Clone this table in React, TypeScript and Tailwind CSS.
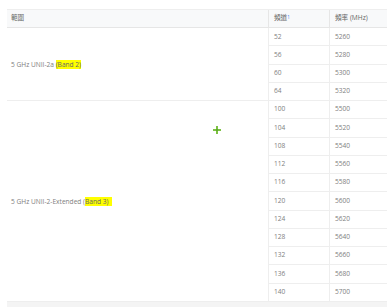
const band2 = [
  ["52", "5260"],
  ["56", "5280"],
  ["60", "5300"],
  ["64", "5320"],
];

const band3 = [
  ["100", "5500"],
  ["104", "5520"],
  ["108", "5540"],
  ["112", "5560"],
  ["116", "5580"],
  ["120", "5600"],
  ["124", "5620"],
  ["128", "5640"],
  ["132", "5660"],
  ["136", "5680"],
  ["140", "5700"],
];

function Row({ ch, mhz }: { ch: string; mhz: string }) {
  return (
    <>
      <div className="flex items-center pl-[5px] border-l border-b border-[#eeeeee]">{ch}</div>
      <div className="flex items-center pl-[5px] border-l border-b border-[#eeeeee]">{mhz}</div>
    </>
  );
}

export default function App() {
  return (
    <div
      className="w-[387px] h-[307px] overflow-hidden bg-white pt-[9px] pl-[7px] text-[6.6px] leading-none text-[#808080]"
      style={{ fontFamily: '"Open Sans", "Noto Sans CJK TC", sans-serif' }}
    >
      <div className="w-[420px] border-t border-[#eeeeee]">
        <div className="grid grid-cols-[261px_61px_98px] grid-rows-[18.3px_repeat(4,18.2px)_repeat(11,18.25px)]">
          <div className="flex items-center pl-[4px] bg-[#f8f9fa] border-b border-[#e6e6e6] text-[#666]">範圍</div>
          <div className="flex items-center pl-[5px] bg-[#f8f9fa] border-l border-b border-[#e6e6e6] text-[#666]">
            頻道<sup className="text-[#3b82f6] text-[4.5px] -top-[2px]">1</sup>
          </div>
          <div className="flex items-center pl-[5px] bg-[#f8f9fa] border-l border-b border-[#e6e6e6] text-[#666]">頻率 (MHz)</div>

          <div className="row-span-4 flex items-center pl-[4px] pt-[2px] border-b border-[#eeeeee]">
            <span>
              5 GHz UNII-2a <span className="bg-[#ffff00] text-[#666]">(Band 2)</span>
            </span>
          </div>
          {band2.map(([c, m]) => (
            <Row key={c} ch={c} mhz={m} />
          ))}

          <div className="row-span-11 relative flex items-center pl-[4px] pt-[3px] border-b border-[#eeeeee]">
            <span>
              5 GHz UNII-2-Extended (<span className="bg-[#ffff00] text-[#666] pr-[3px]">Band 3)</span>
            </span>
            <svg
              className="absolute left-[206px] top-[25px]"
              width="8"
              height="8"
              viewBox="0 0 8 8"
            >
              <rect x="3" y="0" width="2" height="8" fill="#7cc142" />
              <rect x="0" y="3" width="8" height="2" fill="#7cc142" />
              <rect x="3" y="3" width="2" height="2" fill="#5fa82e" />
            </svg>
          </div>
          {band3.map(([c, m]) => (
            <Row key={c} ch={c} mhz={m} />
          ))}
        </div>
        <div className="h-[6px] bg-[#f4f4f4]" />
      </div>
    </div>
  );
}
